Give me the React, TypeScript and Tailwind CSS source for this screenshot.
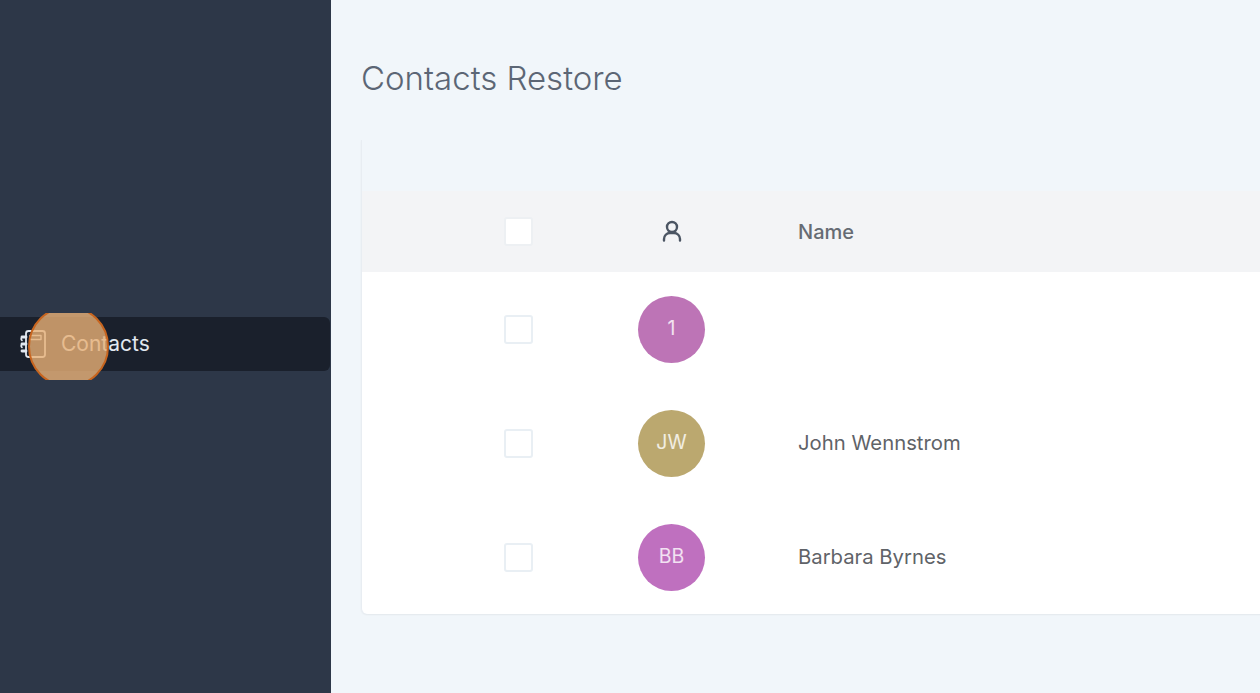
const rows = [
  { initials: "1", color: "bg-[#bd74b6]", name: "" },
  { initials: "JW", color: "bg-[#bba86f]", name: "John Wennstrom" },
  { initials: "BB", color: "bg-[#bf70bf]", name: "Barbara Byrnes" },
];

function ContactsIcon() {
  return (
    <svg width="28" height="30" viewBox="0 0 28 30" fill="none" stroke="currentColor" strokeWidth="1.8" strokeLinecap="round" strokeLinejoin="round">
      <rect x="7" y="2" width="19" height="26" rx="2.5" />
      <path d="M11 6.5h11v4H11z" strokeWidth="1.4" />
      <path d="M3 8h4M3 15h4M3 22h4" strokeWidth="2.8" />
      <path d="M3 8a2.5 2.5 0 0 0 0 3.5M3 15a2.5 2.5 0 0 0 0 3.5" strokeWidth="1.6" />
    </svg>
  );
}

function UserIcon() {
  return (
    <svg width="22" height="24" viewBox="0 0 22 24" fill="none" stroke="#4b5563" strokeWidth="2.4" strokeLinecap="round">
      <circle cx="11" cy="7" r="5" />
      <path d="M3 20.5v-1.5a6 6 0 0 1 6-6h4a6 6 0 0 1 6 6v1.5" />
    </svg>
  );
}

function Checkbox({ header = false }: { header?: boolean }) {
  return (
    <div
      className={`h-[29px] w-[29px] rounded-[3px] border-2 bg-white ${
        header ? "border-[#edf0f3]" : "border-[#e9eff4]"
      }`}
    />
  );
}

export default function App() {
  return (
    <div
      className="flex h-[693px] w-[1260px] overflow-hidden bg-[#f1f6fa]"
      style={{ fontFamily: "Inter, 'Liberation Sans', sans-serif" }}
    >
      <aside className="relative w-[331px] shrink-0 bg-[#2d3748] pt-[317px]">
        <div className="flex h-[54px] w-[330px] items-center gap-[14px] rounded-r-md bg-[#1a202c] pl-[19px] text-[21px] text-[#e2e8f0]">
          <ContactsIcon />
          <span>Contacts</span>
        </div>
        <div className="absolute left-[28px] top-[313px] h-[67px] w-[81px] overflow-hidden">
          <div className="h-[81px] w-[81px] -translate-y-[7px] rounded-full border-2 border-[#c8651f] bg-[#e8b077]/80" />
        </div>
      </aside>

      <main className="min-w-0 flex-1 pl-[30px]">
        <h1 className="flex h-[140px] items-start pt-[57px] text-[33px] font-light leading-[42px] text-[#5c6675]">
          Contacts Restore
        </h1>

        <div className="w-[1000px] rounded-b-md border-l border-[#e8edf2] shadow-[0_1px_2px_rgba(0,0,0,0.06)]">
          <div className="h-[51px]" />
          <div className="grid h-[81px] grid-cols-[142px_29px_105px_67px_93px_1fr] items-center bg-[#f3f4f6] text-[20px] font-medium text-[#666b73]">
            <div className="col-start-2">
              <Checkbox header />
            </div>
            <div className="col-start-4 flex justify-center">
              <UserIcon />
            </div>
            <div className="col-start-6">Name</div>
          </div>
          <div className="rounded-b-md bg-white">
            {rows.map((row) => (
              <div
                key={row.initials}
                className="grid h-[114px] grid-cols-[142px_29px_105px_67px_93px_1fr] items-center text-[20.3px] text-[#5f6368]"
              >
                <div className="col-start-2">
                  <Checkbox />
                </div>
                <div
                  className={`col-start-4 flex h-[67px] w-[67px] items-center justify-center rounded-full text-[19.5px] text-white/80 ${row.color}`}
                >
                  {row.initials}
                </div>
                <div className="col-start-6">{row.name}</div>
              </div>
            ))}
          </div>
        </div>
      </main>
    </div>
  );
}
